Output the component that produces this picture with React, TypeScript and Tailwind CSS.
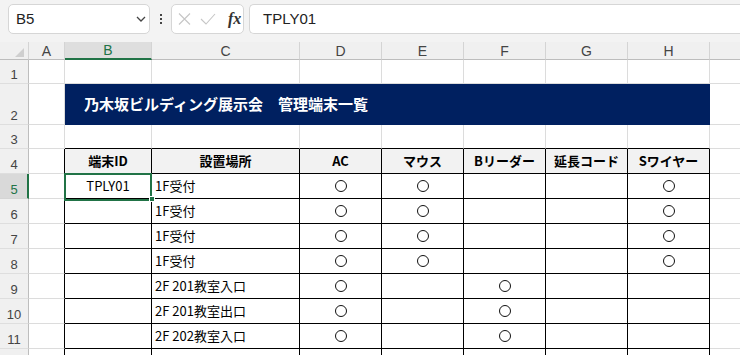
import React from 'react';

type ColDef = { key: string; w: string };

const cols: ColDef[] = [
  { key: 'A', w: 'w-[36px]' },
  { key: 'B', w: 'w-[87px]' },
  { key: 'C', w: 'w-[148px]' },
  { key: 'D', w: 'w-[82px]' },
  { key: 'E', w: 'w-[82px]' },
  { key: 'F', w: 'w-[82px]' },
  { key: 'G', w: 'w-[82px]' },
  { key: 'H', w: 'w-[82px]' },
  { key: 'I', w: 'w-[82px]' },
];

const markCols: ColDef[] = cols.slice(3, 8);

type DataRow = { n: number; b?: string; c?: string; m: boolean[] };

const dataRows: DataRow[] = [
  { n: 5, b: 'TPLY01', c: '1F受付', m: [true, true, false, false, true] },
  { n: 6, c: '1F受付', m: [true, true, false, false, true] },
  { n: 7, c: '1F受付', m: [true, true, false, false, true] },
  { n: 8, c: '1F受付', m: [true, true, false, false, true] },
  { n: 9, c: '2F 201教室入口', m: [true, false, true, false, false] },
  { n: 10, c: '2F 201教室出口', m: [true, false, true, false, false] },
  { n: 11, c: '2F 202教室入口', m: [true, false, true, false, false] },
  { n: 12, c: '', m: [false, false, false, false, false] },
];

const headers = ['端末ID', '設置場所', 'AC', 'マウス', 'Bリーダー', '延長コード', 'Sワイヤー'];

function RowHead({ n, selected }: { n: number; selected?: boolean }) {
  return (
    <div
      className={
        selected
          ? "w-[29px] shrink-0 flex items-end justify-center bg-[#d9d9d9] border-b border-b-[#d4d4d4] border-r-2 border-r-[#217346] text-[#217346] text-[13px] leading-[14px] font-['Liberation_Sans',sans-serif] pb-[1px] pl-[1px]"
          : "w-[29px] shrink-0 flex items-end justify-center bg-[#f0f0f0] border-b border-b-[#dedede] border-r border-r-[#bdbdbd] text-[#444] text-[13px] leading-[14px] font-['Liberation_Sans',sans-serif] pb-[1px]"
      }
    >
      {n}
    </div>
  );
}

function Gcell({ w, extra }: { w: string; extra?: string }) {
  return <div className={`${w} shrink-0 border-r border-b border-[#dcdcdc] ${extra ?? ''}`} />;
}

function Circle() {
  return <div className="w-[12px] h-[12px] rounded-full border-[1.5px] border-[#111]" />;
}

export default function App() {
  return (
    <div className="w-[740px] h-[355px] overflow-hidden bg-white relative font-['Noto_Sans_CJK_JP',sans-serif]">
      {/* formula bar */}
      <div className="h-[42px] bg-[#f3f3f3] flex items-start pt-[4px]">
        <div className="ml-[8px] w-[142px] h-[30px] shrink-0 bg-white border border-[#d6d6d6] rounded-[5px] flex items-center pl-[7px] pr-[3px]">
          <span className="flex-1 text-[15px] text-[#222] font-['Liberation_Sans',sans-serif]">B5</span>
          <svg width="10" height="6" viewBox="0 0 10 6">
            <polyline points="1,1 5,5 9,1" fill="none" stroke="#444" strokeWidth="1.3" />
          </svg>
        </div>
        <div className="w-[21px] h-[30px] shrink-0 flex flex-col items-center justify-center gap-[2px]">
          <div className="w-[2px] h-[2px] bg-[#444]" />
          <div className="w-[2px] h-[2px] bg-[#444]" />
          <div className="w-[2px] h-[2px] bg-[#444]" />
        </div>
        <div className="w-[73px] h-[30px] shrink-0 bg-white border border-[#d6d6d6] rounded-[5px] flex items-center pl-[6px]">
          <svg width="13" height="12" viewBox="0 0 13 12">
            <path d="M1 0.5 L12 11.5 M12 0.5 L1 11.5" stroke="#c6c6c6" strokeWidth="1.1" fill="none" />
          </svg>
          <svg className="ml-[9px]" width="16" height="12" viewBox="0 0 16 12">
            <path d="M1 6 L6 11 L15 1" stroke="#c6c6c6" strokeWidth="1.1" fill="none" />
          </svg>
          <span className="ml-[12px] text-[16px] leading-none italic font-semibold text-[#333] font-['Liberation_Serif',serif]">fx</span>
        </div>
        <div className="ml-[5px] flex-1 h-[30px] bg-white border border-r-0 border-[#d6d6d6] rounded-l-[5px] flex items-center pl-[13px]">
          <span className="text-[15px] text-[#222] font-['Liberation_Sans',sans-serif]">TPLY01</span>
        </div>
      </div>

      {/* column headers */}
      <div className="flex h-[18px] bg-[#f0f0f0]">
        <div className="w-[29px] shrink-0 border-r border-r-[#d4d4d4] border-b border-b-[#bdbdbd] flex items-end justify-end pr-[4px] pb-[2px]">
          <svg width="9" height="9" viewBox="0 0 9 9">
            <polygon points="9,0 9,9 0,9" fill="#cfcfcf" />
          </svg>
        </div>
        {cols.map((c) =>
          c.key === 'B' ? (
            <div
              key={c.key}
              className={`${c.w} shrink-0 bg-[#dedede] border-r border-r-[#d4d4d4] border-b-2 border-b-[#217346] flex items-center justify-center text-[14px] leading-none text-[#217346] font-['Liberation_Sans',sans-serif]`}
            >
              {c.key}
            </div>
          ) : (
            <div
              key={c.key}
              className={`${c.w} shrink-0 border-r border-r-[#d4d4d4] border-b border-b-[#bdbdbd] flex items-center justify-center text-[14px] leading-none text-[#444] font-['Liberation_Sans',sans-serif]`}
            >
              {c.key}
            </div>
          )
        )}
      </div>

      {/* row 1 */}
      <div className="flex h-[24px]">
        <RowHead n={1} />
        {cols.map((c) => (
          <Gcell key={c.key} w={c.w} />
        ))}
      </div>

      {/* row 2 title */}
      <div className="flex h-[41px]">
        <RowHead n={2} />
        <Gcell w="w-[36px]" />
        <div className="w-[645px] shrink-0 bg-[#002060] flex items-center pl-[19px] text-white text-[15px] font-bold">
          乃木坂ビルディング展示会　管理端末一覧
        </div>
        <Gcell w="w-[82px]" />
      </div>

      {/* row 3 */}
      <div className="flex h-[24px]">
        <RowHead n={3} />
        {cols.map((c) =>
          c.key === 'A' || c.key === 'I' ? (
            <Gcell key={c.key} w={c.w} />
          ) : (
            <Gcell key={c.key} w={c.w} extra="border-b-black" />
          )
        )}
      </div>

      {/* row 4 table header */}
      <div className="flex h-[25px]">
        <RowHead n={4} />
        <Gcell w="w-[36px]" extra="border-r-black" />
        {cols.slice(1, 8).map((c, i) => (
          <div
            key={c.key}
            className={`${c.w} shrink-0 bg-[#f2f2f2] border-r border-b border-black flex items-center justify-center text-[13px] font-bold text-black`}
          >
            {headers[i]}
          </div>
        ))}
        <Gcell w="w-[82px]" />
      </div>

      {/* data rows */}
      {dataRows.map((r) => (
        <div key={r.n} className="flex h-[25px]">
          <RowHead n={r.n} selected={r.n === 5} />
          <Gcell w="w-[36px]" extra="border-r-black" />
          <div className="w-[87px] shrink-0 border-r border-b border-black flex items-center justify-center text-[13px] text-black">
            {r.b ?? ''}
          </div>
          <div className="w-[148px] shrink-0 border-r border-b border-black flex items-center pl-[3px] text-[13px] text-black">
            {r.c ?? ''}
          </div>
          {markCols.map((c, i) => (
            <div key={c.key} className={`${c.w} shrink-0 border-r border-b border-black flex items-center justify-center`}>
              {r.m[i] ? <Circle /> : null}
            </div>
          ))}
          <Gcell w="w-[82px]" />
        </div>
      ))}

      {/* selection box over B5 */}
      <div className="absolute left-[64px] top-[173px] w-[88px] h-[28px] border-2 border-[#217346] pointer-events-none" />
      <div className="absolute left-[149px] top-[196px] w-[6px] h-[6px] bg-[#217346] border border-white pointer-events-none" />
    </div>
  );
}
